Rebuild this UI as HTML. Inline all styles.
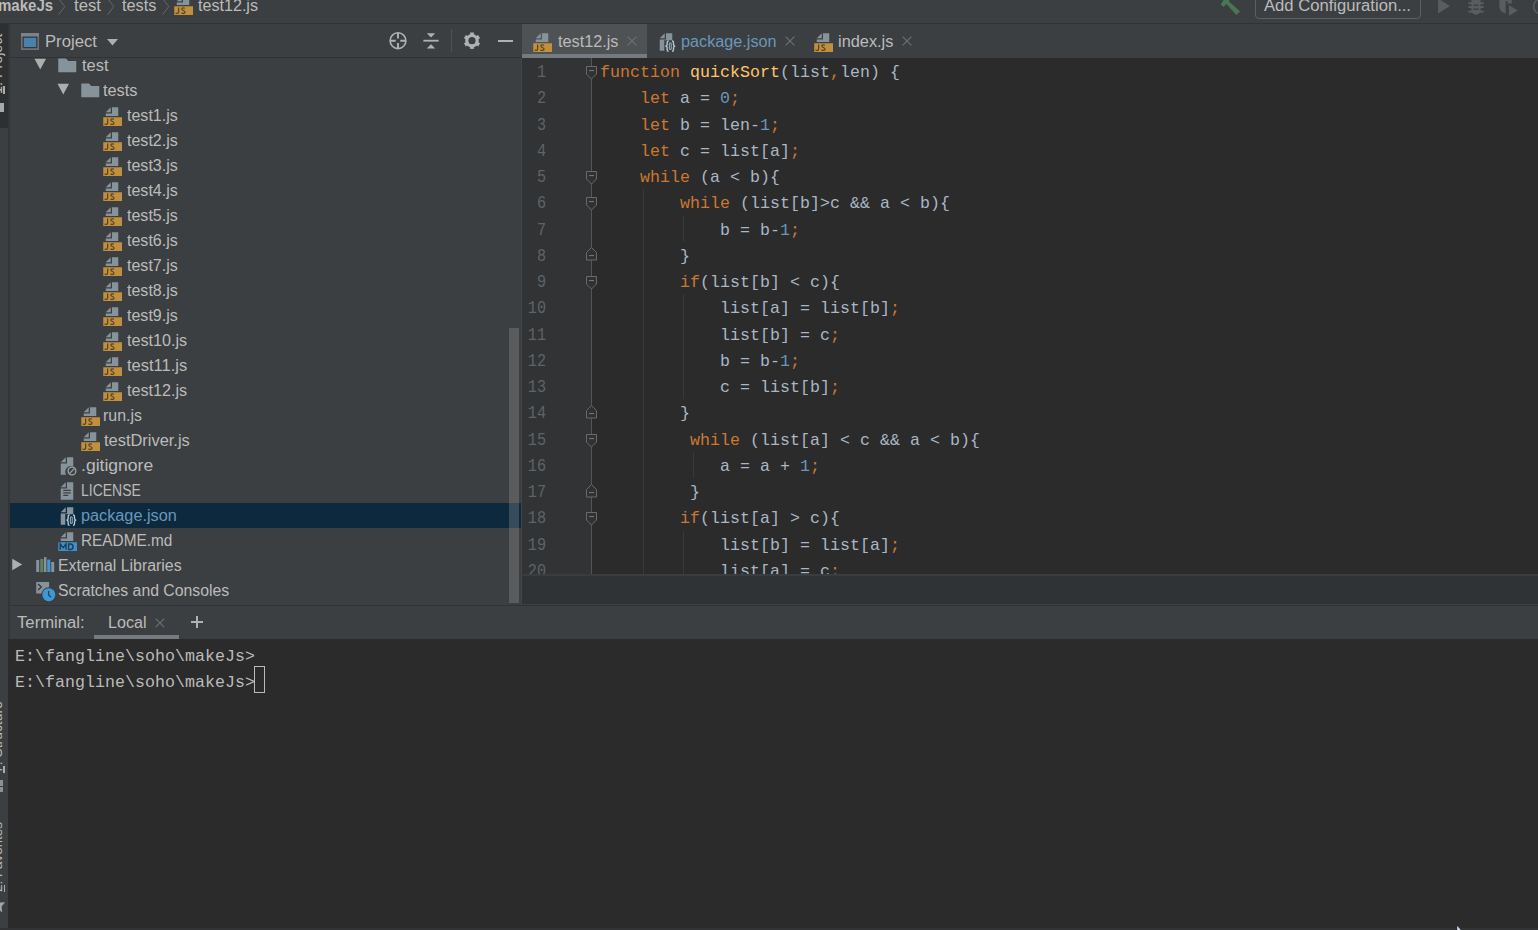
<!DOCTYPE html>
<html><head><meta charset="utf-8"><title>makeJs</title>
<style>
*{margin:0;padding:0;box-sizing:border-box}
html,body{width:1538px;height:930px;overflow:hidden;background:#3c3f41}
body{position:relative;font-family:"Liberation Sans",sans-serif;font-size:16px;color:#bbbbbb}
.abs{position:absolute}
.t{position:absolute;white-space:pre;line-height:20px;height:20px}
.mono{font-family:"Liberation Mono",monospace}
svg{position:absolute;overflow:visible}
.k{color:#cc7832}.n{color:#6897bb}.f{color:#ffc66d}
.cl{position:absolute;left:600.1px;white-space:pre;font-family:"Liberation Mono",monospace;font-size:16.6px;letter-spacing:.0384px;line-height:26px;height:26px;color:#a9b7c6}
.ln{position:absolute;left:516px;width:30px;text-align:right;white-space:pre;transform:scaleX(.84);transform-origin:100% 0;font-family:"Liberation Mono",monospace;font-size:18px;line-height:26px;height:26px;color:#606366}
</style></head>
<body>
<div class="abs" style="left:0;top:23px;width:1538px;height:1px;background:#323232"></div>
<div class="t" style="left:-1.6px;top:-4.4px;font-weight:bold;transform-origin:0 0;transform:scaleX(0.94)">makeJs</div>
<div class="t" style="left:73.50px;top:-4.4px;transform-origin:0 0;transform:scaleX(1.0440);">test</div>
<div class="t" style="left:122.40px;top:-4.4px;transform-origin:0 0;transform:scaleX(1.0181);">tests</div>
<div class="t" style="left:197.80px;top:-4.4px;transform-origin:0 0;transform:scaleX(1.0069);">test12.js</div>
<svg style="left:58px;top:-2px" width="8" height="18"><path d="M0.5 0.5 L6.8 8.5 L0.5 16.8" fill="none" stroke="#646769" stroke-width="1"/></svg>
<svg style="left:107px;top:-2px" width="8" height="18"><path d="M0.5 0.5 L6.8 8.5 L0.5 16.8" fill="none" stroke="#646769" stroke-width="1"/></svg>
<svg style="left:162.3px;top:-2px" width="8" height="18"><path d="M0.5 0.5 L6.8 8.5 L0.5 16.8" fill="none" stroke="#646769" stroke-width="1"/></svg>
<svg style="left:172.6px;top:-5px" width="20" height="20" viewBox="0 0 16 16"><polygon fill="#c0903f" points="1 16 16 16 16 9 1 9"/>
  <polygon fill="#87939a" points="7 1 3 5 7 5"/>
  <polygon fill="#87939a" points="8 1 8 6 3 6 3 8 13 8 13 1"/>
  <path fill="none" stroke="#5a4324" stroke-width="1" d="M2.1 14.2 C2.6 14.9 4.5 15 4.5 13.6 L4.5 10 M9.5 10.7 C8.7 9.9 6.9 10.1 7.1 11.4 C7.3 12.6 9.6 12.2 9.6 13.6 C9.6 15 7.7 15 6.8 14.2"/></svg>
<svg style="left:1212px;top:0" width="40" height="20" viewBox="0 0 40 20"><polygon fill="#4b7655" points="12.2,-1 8.8,4.3 11.4,7 14.4,3.9 24.4,15.1 28.1,11.4 17,1.6 17.3,-1"/></svg>
<div class="abs" style="left:1255px;top:-12px;width:166px;height:31px;border:1px solid #5e6060;border-radius:4px"></div>
<div class="t" style="left:1263.70px;top:-4.3px;transform-origin:0 0;transform:scaleX(1.0394);">Add Configuration...</div>
<svg style="left:1430px;top:0" width="108" height="24" viewBox="0 0 108 24"><g fill="#5a5d5f"><path d="M8.1 -1.4 L20 6 L8.1 13.4 Z"/><path d="M41.4 -3 H50.6 V10.1 A4.6 4.6 0 0 1 41.4 10.1 Z"/><rect x="38.3" y="2.3" width="15.4" height="1.9"/><rect x="38.3" y="6.1" width="15.4" height="1.9"/><rect x="38.3" y="10.7" width="15.4" height="1.9"/><path d="M69.3 -2 H81.8 V3.6 H76.6 V11.6 L75.4 13.6 C71.6 12.2 69.3 9.8 69.3 6.6 Z"/><path d="M79 5.3 L87.8 10.5 L79 15.8 Z"/></g><g fill="#3c3f41"><rect x="43.4" y="4.6" width="5.3" height="1.3"/><rect x="43.4" y="8.5" width="5.3" height="1.3"/><rect x="75.6" y="1" width="1.9" height="11.4"/></g><circle cx="111.2" cy="6.4" r="7.6" fill="none" stroke="#5a5d5f" stroke-width="1.5"/></svg>
<div class="abs" style="left:0;top:24px;width:8.4px;height:104px;background:#2d2f30"></div>
<div class="abs" style="left:8.4px;top:24px;width:1.25px;height:615px;background:#333638"></div>
<div class="abs" style="left:2.1px;top:93.6px;width:0;height:0"><div style="position:absolute;left:0;top:0;transform-origin:0 0;transform:rotate(-90deg) translateY(-14.95px);white-space:pre;font-size:14.3px;line-height:20px;height:20px;color:#bbbbbb">1: Project</div></div>
<div class="abs" style="left:2.9000000000000004px;top:85.6px;width:1.7px;height:8.0px;background:#a9abac"></div>
<div class="abs" style="left:2.1px;top:773.2px;width:0;height:0"><div style="position:absolute;left:0;top:0;transform-origin:0 0;transform:rotate(-90deg) translateY(-14.82px);white-space:pre;font-size:13.9px;line-height:20px;height:20px;color:#bbbbbb">7: Structure</div></div>
<div class="abs" style="left:2.9000000000000004px;top:765.5px;width:1.7px;height:7.7px;background:#a9abac"></div>
<div class="abs" style="left:2.9px;top:892.2px;width:0;height:0"><div style="position:absolute;left:0;top:0;transform-origin:0 0;transform:rotate(-90deg) translateY(-14.64px);white-space:pre;font-size:13.4px;line-height:20px;height:20px;color:#bbbbbb">2: Favorites</div></div>
<div class="abs" style="left:3.7px;top:884.7px;width:1.7px;height:7.5px;background:#a9abac"></div>
<div class="abs" style="left:0;top:103px;width:3.6px;height:9.4px;background:#a6a8a9"></div>
<div class="abs" style="left:0;top:780.4px;width:2.6px;height:5.4px;background:#8d9194"></div>
<div class="abs" style="left:0;top:787px;width:2.6px;height:5.4px;background:#8d9194"></div>
<svg style="left:0;top:901px" width="6" height="13" viewBox="0 0 6 13"><path d="M0 1.6 L5 1.2 L1.6 5.4 L2.2 11.6 L0 9.4 Z" fill="#a4a6a7"/></svg>
<div class="abs" style="left:9.5px;top:57px;width:512.5px;height:1px;background:#323232"></div>
<svg style="left:21px;top:33px" width="18" height="17" viewBox="0 0 18 17"><rect x="0" y="0" width="18" height="17" fill="#6c7175"/><rect x="0" y="0" width="18" height="3.4" fill="#7b8389"/><rect x="1.6" y="3.6" width="14.8" height="11.6" fill="#34383b"/><rect x="2.8" y="4.8" width="12.4" height="9.2" fill="#4a80ac"/></svg>
<div class="t" style="left:44.50px;top:31.6px;transform-origin:0 0;transform:scaleX(1.0415);">Project</div>
<svg style="left:107.4px;top:39px" width="11" height="7"><path d="M0 0 H11 L5.5 6.6 Z" fill="#adafaf"/></svg>
<svg style="left:388px;top:31px" width="20" height="20" viewBox="0 0 20 20"><g fill="none" stroke="#afb1b3"><circle cx="10" cy="9.7" r="7.9" stroke-width="1.6"/><path stroke-width="1.9" d="M10 1.8 V7.4 M10 12 V17.6 M2.1 9.7 H7.7 M12.3 9.7 H17.9"/></g></svg>
<svg style="left:421px;top:31px" width="20" height="20" viewBox="0 0 20 20"><g fill="#afb1b3"><rect x="2.4" y="8.8" width="15.2" height="1.8"/><path d="M5.8 2.2 H14.2 L10 6.4 Z"/><path d="M5.8 17.4 H14.2 L10 13.2 Z"/></g></svg>
<div class="abs" style="left:451px;top:29px;width:1px;height:24px;background:#4f5254"></div>
<svg style="left:462px;top:31px" width="20" height="20" viewBox="0 0 20 20"><g transform="translate(10 9.7)"><circle r="5.2" fill="none" stroke="#afb1b3" stroke-width="3.2"/><rect x="-1.9" y="-8.2" width="3.8" height="3.4" fill="#afb1b3" transform="rotate(0)"/><rect x="-1.9" y="-8.2" width="3.8" height="3.4" fill="#afb1b3" transform="rotate(60)"/><rect x="-1.9" y="-8.2" width="3.8" height="3.4" fill="#afb1b3" transform="rotate(120)"/><rect x="-1.9" y="-8.2" width="3.8" height="3.4" fill="#afb1b3" transform="rotate(180)"/><rect x="-1.9" y="-8.2" width="3.8" height="3.4" fill="#afb1b3" transform="rotate(240)"/><rect x="-1.9" y="-8.2" width="3.8" height="3.4" fill="#afb1b3" transform="rotate(300)"/></g></svg>
<div class="abs" style="left:497.5px;top:39.6px;width:15.4px;height:2px;background:#afb1b3"></div>
<div class="abs" style="left:9.5px;top:503px;width:512.5px;height:25px;background:#0d293e"></div>
<svg style="left:29.999999999999996px;top:55.3px" width="20" height="20" viewBox="0 0 16 16"><path fill="#adafaf" d="M3.6 3 L12.8 3 L8.2 11.5 Z"/></svg>
<svg style="left:56.8px;top:56px" width="20" height="20" viewBox="0 0 16 16"><path fill="#87939a" d="M1 13 L15.4 13 L15.4 4 L9 4 L7.2 2 L1 2 Z"/></svg>
<div class="t" style="left:81.60px;top:56.2px;transform-origin:0 0;transform:scaleX(1.0251);">test</div>
<svg style="left:53.0px;top:80.3px" width="20" height="20" viewBox="0 0 16 16"><path fill="#adafaf" d="M3.6 3 L12.8 3 L8.2 11.5 Z"/></svg>
<svg style="left:79.8px;top:81px" width="20" height="20" viewBox="0 0 16 16"><path fill="#87939a" d="M1 13 L15.4 13 L15.4 4 L9 4 L7.2 2 L1 2 Z"/></svg>
<div class="t" style="left:103.30px;top:81.2px;transform-origin:0 0;transform:scaleX(1.0210);">tests</div>
<svg style="left:101.8px;top:106px" width="20" height="20" viewBox="0 0 16 16"><polygon fill="#c0903f" points="1 16 16 16 16 9 1 9"/>
  <polygon fill="#87939a" points="7 1 3 5 7 5"/>
  <polygon fill="#87939a" points="8 1 8 6 3 6 3 8 13 8 13 1"/>
  <path fill="none" stroke="#5a4324" stroke-width="1" d="M2.1 14.2 C2.6 14.9 4.5 15 4.5 13.6 L4.5 10 M9.5 10.7 C8.7 9.9 6.9 10.1 7.1 11.4 C7.3 12.6 9.6 12.2 9.6 13.6 C9.6 15 7.7 15 6.8 14.2"/></svg>
<div class="t" style="left:126.80px;top:106.2px;transform-origin:0 0;transform:scaleX(1.0022);">test1.js</div>
<svg style="left:101.8px;top:131px" width="20" height="20" viewBox="0 0 16 16"><polygon fill="#c0903f" points="1 16 16 16 16 9 1 9"/>
  <polygon fill="#87939a" points="7 1 3 5 7 5"/>
  <polygon fill="#87939a" points="8 1 8 6 3 6 3 8 13 8 13 1"/>
  <path fill="none" stroke="#5a4324" stroke-width="1" d="M2.1 14.2 C2.6 14.9 4.5 15 4.5 13.6 L4.5 10 M9.5 10.7 C8.7 9.9 6.9 10.1 7.1 11.4 C7.3 12.6 9.6 12.2 9.6 13.6 C9.6 15 7.7 15 6.8 14.2"/></svg>
<div class="t" style="left:126.80px;top:131.2px;transform-origin:0 0;transform:scaleX(1.0022);">test2.js</div>
<svg style="left:101.8px;top:156px" width="20" height="20" viewBox="0 0 16 16"><polygon fill="#c0903f" points="1 16 16 16 16 9 1 9"/>
  <polygon fill="#87939a" points="7 1 3 5 7 5"/>
  <polygon fill="#87939a" points="8 1 8 6 3 6 3 8 13 8 13 1"/>
  <path fill="none" stroke="#5a4324" stroke-width="1" d="M2.1 14.2 C2.6 14.9 4.5 15 4.5 13.6 L4.5 10 M9.5 10.7 C8.7 9.9 6.9 10.1 7.1 11.4 C7.3 12.6 9.6 12.2 9.6 13.6 C9.6 15 7.7 15 6.8 14.2"/></svg>
<div class="t" style="left:126.80px;top:156.2px;transform-origin:0 0;transform:scaleX(1.0022);">test3.js</div>
<svg style="left:101.8px;top:181px" width="20" height="20" viewBox="0 0 16 16"><polygon fill="#c0903f" points="1 16 16 16 16 9 1 9"/>
  <polygon fill="#87939a" points="7 1 3 5 7 5"/>
  <polygon fill="#87939a" points="8 1 8 6 3 6 3 8 13 8 13 1"/>
  <path fill="none" stroke="#5a4324" stroke-width="1" d="M2.1 14.2 C2.6 14.9 4.5 15 4.5 13.6 L4.5 10 M9.5 10.7 C8.7 9.9 6.9 10.1 7.1 11.4 C7.3 12.6 9.6 12.2 9.6 13.6 C9.6 15 7.7 15 6.8 14.2"/></svg>
<div class="t" style="left:126.80px;top:181.2px;transform-origin:0 0;transform:scaleX(1.0022);">test4.js</div>
<svg style="left:101.8px;top:206px" width="20" height="20" viewBox="0 0 16 16"><polygon fill="#c0903f" points="1 16 16 16 16 9 1 9"/>
  <polygon fill="#87939a" points="7 1 3 5 7 5"/>
  <polygon fill="#87939a" points="8 1 8 6 3 6 3 8 13 8 13 1"/>
  <path fill="none" stroke="#5a4324" stroke-width="1" d="M2.1 14.2 C2.6 14.9 4.5 15 4.5 13.6 L4.5 10 M9.5 10.7 C8.7 9.9 6.9 10.1 7.1 11.4 C7.3 12.6 9.6 12.2 9.6 13.6 C9.6 15 7.7 15 6.8 14.2"/></svg>
<div class="t" style="left:126.80px;top:206.2px;transform-origin:0 0;transform:scaleX(1.0022);">test5.js</div>
<svg style="left:101.8px;top:231px" width="20" height="20" viewBox="0 0 16 16"><polygon fill="#c0903f" points="1 16 16 16 16 9 1 9"/>
  <polygon fill="#87939a" points="7 1 3 5 7 5"/>
  <polygon fill="#87939a" points="8 1 8 6 3 6 3 8 13 8 13 1"/>
  <path fill="none" stroke="#5a4324" stroke-width="1" d="M2.1 14.2 C2.6 14.9 4.5 15 4.5 13.6 L4.5 10 M9.5 10.7 C8.7 9.9 6.9 10.1 7.1 11.4 C7.3 12.6 9.6 12.2 9.6 13.6 C9.6 15 7.7 15 6.8 14.2"/></svg>
<div class="t" style="left:126.80px;top:231.2px;transform-origin:0 0;transform:scaleX(1.0022);">test6.js</div>
<svg style="left:101.8px;top:256px" width="20" height="20" viewBox="0 0 16 16"><polygon fill="#c0903f" points="1 16 16 16 16 9 1 9"/>
  <polygon fill="#87939a" points="7 1 3 5 7 5"/>
  <polygon fill="#87939a" points="8 1 8 6 3 6 3 8 13 8 13 1"/>
  <path fill="none" stroke="#5a4324" stroke-width="1" d="M2.1 14.2 C2.6 14.9 4.5 15 4.5 13.6 L4.5 10 M9.5 10.7 C8.7 9.9 6.9 10.1 7.1 11.4 C7.3 12.6 9.6 12.2 9.6 13.6 C9.6 15 7.7 15 6.8 14.2"/></svg>
<div class="t" style="left:126.80px;top:256.2px;transform-origin:0 0;transform:scaleX(1.0022);">test7.js</div>
<svg style="left:101.8px;top:281px" width="20" height="20" viewBox="0 0 16 16"><polygon fill="#c0903f" points="1 16 16 16 16 9 1 9"/>
  <polygon fill="#87939a" points="7 1 3 5 7 5"/>
  <polygon fill="#87939a" points="8 1 8 6 3 6 3 8 13 8 13 1"/>
  <path fill="none" stroke="#5a4324" stroke-width="1" d="M2.1 14.2 C2.6 14.9 4.5 15 4.5 13.6 L4.5 10 M9.5 10.7 C8.7 9.9 6.9 10.1 7.1 11.4 C7.3 12.6 9.6 12.2 9.6 13.6 C9.6 15 7.7 15 6.8 14.2"/></svg>
<div class="t" style="left:126.80px;top:281.2px;transform-origin:0 0;transform:scaleX(1.0022);">test8.js</div>
<svg style="left:101.8px;top:306px" width="20" height="20" viewBox="0 0 16 16"><polygon fill="#c0903f" points="1 16 16 16 16 9 1 9"/>
  <polygon fill="#87939a" points="7 1 3 5 7 5"/>
  <polygon fill="#87939a" points="8 1 8 6 3 6 3 8 13 8 13 1"/>
  <path fill="none" stroke="#5a4324" stroke-width="1" d="M2.1 14.2 C2.6 14.9 4.5 15 4.5 13.6 L4.5 10 M9.5 10.7 C8.7 9.9 6.9 10.1 7.1 11.4 C7.3 12.6 9.6 12.2 9.6 13.6 C9.6 15 7.7 15 6.8 14.2"/></svg>
<div class="t" style="left:126.80px;top:306.2px;transform-origin:0 0;transform:scaleX(1.0022);">test9.js</div>
<svg style="left:101.8px;top:331px" width="20" height="20" viewBox="0 0 16 16"><polygon fill="#c0903f" points="1 16 16 16 16 9 1 9"/>
  <polygon fill="#87939a" points="7 1 3 5 7 5"/>
  <polygon fill="#87939a" points="8 1 8 6 3 6 3 8 13 8 13 1"/>
  <path fill="none" stroke="#5a4324" stroke-width="1" d="M2.1 14.2 C2.6 14.9 4.5 15 4.5 13.6 L4.5 10 M9.5 10.7 C8.7 9.9 6.9 10.1 7.1 11.4 C7.3 12.6 9.6 12.2 9.6 13.6 C9.6 15 7.7 15 6.8 14.2"/></svg>
<div class="t" style="left:126.80px;top:331.2px;transform-origin:0 0;transform:scaleX(1.0102);">test10.js</div>
<svg style="left:101.8px;top:356px" width="20" height="20" viewBox="0 0 16 16"><polygon fill="#c0903f" points="1 16 16 16 16 9 1 9"/>
  <polygon fill="#87939a" points="7 1 3 5 7 5"/>
  <polygon fill="#87939a" points="8 1 8 6 3 6 3 8 13 8 13 1"/>
  <path fill="none" stroke="#5a4324" stroke-width="1" d="M2.1 14.2 C2.6 14.9 4.5 15 4.5 13.6 L4.5 10 M9.5 10.7 C8.7 9.9 6.9 10.1 7.1 11.4 C7.3 12.6 9.6 12.2 9.6 13.6 C9.6 15 7.7 15 6.8 14.2"/></svg>
<div class="t" style="left:126.80px;top:356.2px;transform-origin:0 0;transform:scaleX(1.0308);">test11.js</div>
<svg style="left:101.8px;top:381px" width="20" height="20" viewBox="0 0 16 16"><polygon fill="#c0903f" points="1 16 16 16 16 9 1 9"/>
  <polygon fill="#87939a" points="7 1 3 5 7 5"/>
  <polygon fill="#87939a" points="8 1 8 6 3 6 3 8 13 8 13 1"/>
  <path fill="none" stroke="#5a4324" stroke-width="1" d="M2.1 14.2 C2.6 14.9 4.5 15 4.5 13.6 L4.5 10 M9.5 10.7 C8.7 9.9 6.9 10.1 7.1 11.4 C7.3 12.6 9.6 12.2 9.6 13.6 C9.6 15 7.7 15 6.8 14.2"/></svg>
<div class="t" style="left:126.80px;top:381.2px;transform-origin:0 0;transform:scaleX(1.0102);">test12.js</div>
<svg style="left:79.8px;top:406px" width="20" height="20" viewBox="0 0 16 16"><polygon fill="#c0903f" points="1 16 16 16 16 9 1 9"/>
  <polygon fill="#87939a" points="7 1 3 5 7 5"/>
  <polygon fill="#87939a" points="8 1 8 6 3 6 3 8 13 8 13 1"/>
  <path fill="none" stroke="#5a4324" stroke-width="1" d="M2.1 14.2 C2.6 14.9 4.5 15 4.5 13.6 L4.5 10 M9.5 10.7 C8.7 9.9 6.9 10.1 7.1 11.4 C7.3 12.6 9.6 12.2 9.6 13.6 C9.6 15 7.7 15 6.8 14.2"/></svg>
<div class="t" style="left:102.70px;top:406.2px;transform-origin:0 0;transform:scaleX(0.9942);">run.js</div>
<svg style="left:79.8px;top:431px" width="20" height="20" viewBox="0 0 16 16"><polygon fill="#c0903f" points="1 16 16 16 16 9 1 9"/>
  <polygon fill="#87939a" points="7 1 3 5 7 5"/>
  <polygon fill="#87939a" points="8 1 8 6 3 6 3 8 13 8 13 1"/>
  <path fill="none" stroke="#5a4324" stroke-width="1" d="M2.1 14.2 C2.6 14.9 4.5 15 4.5 13.6 L4.5 10 M9.5 10.7 C8.7 9.9 6.9 10.1 7.1 11.4 C7.3 12.6 9.6 12.2 9.6 13.6 C9.6 15 7.7 15 6.8 14.2"/></svg>
<div class="t" style="left:103.70px;top:431.2px;transform-origin:0 0;transform:scaleX(1.0267);">testDriver.js</div>
<svg style="left:56.8px;top:456px" width="20" height="20" viewBox="0 0 16 16"><polygon fill="#87939a" points="7 1 3 5 7 5"/>
  <path fill="#87939a" d="M8 1 L8 6 L3 6 L3 15 L7.3 15 A4.6 4.6 0 0 1 13 8.4 L13 1 Z"/>
  <circle cx="12" cy="12" r="3.1" fill="none" stroke="#9aa3a9" stroke-width="1.1"/>
  <path d="M9.9 14.1 L14.1 9.9" stroke="#9aa3a9" stroke-width="1.1"/></svg>
<div class="t" style="left:80.50px;top:456.2px;transform-origin:0 0;transform:scaleX(1.0967);">.gitignore</div>
<svg style="left:56.8px;top:481px" width="20" height="20" viewBox="0 0 16 16"><polygon fill="#87939a" points="7 1 3 5 7 5"/>
  <path fill="#87939a" fill-rule="evenodd" d="M8 1 L8 6 L3 6 L3 15 L13 15 L13 1 Z M5 7 H11 V8 H5 Z M5 9 H11 V10 H5 Z M5 11 H9 V12 H5 Z"/></svg>
<div class="t" style="left:80.80px;top:481.2px;transform-origin:0 0;transform:scaleX(0.8743);">LICENSE</div>
<svg style="left:56.8px;top:506px" width="20" height="20" viewBox="0 0 16 16"><polygon fill="#87939a" points="7 1 3 5 7 5"/>
  <path fill="#87939a" d="M8 1 L8 6 L3 6 L3 15 L6.6 15 L6.6 6.6 L13 6.6 L13 1 Z"/>
  <path fill="none" stroke="#b6cbd8" stroke-width="1.1" d="M10.1 7.2 C9.1 7.2 8.9 7.8 8.9 8.6 V10 C8.9 10.8 8.5 11.3 7.5 11.3 C8.5 11.3 8.9 11.8 8.9 12.6 V14.1 C8.9 14.9 9.1 15.5 10.1 15.5 M12.8 7.2 C13.8 7.2 14 7.8 14 8.6 V10 C14 10.8 14.4 11.3 15.4 11.3 C14.4 11.3 14 11.8 14 12.6 V14.1 C14 14.9 13.8 15.5 12.8 15.5"/>
  <rect x="10.7" y="8.6" width="1.5" height="5.4" rx=".75" fill="none" stroke="#8fa9ba" stroke-width=".9"/></svg>
<div class="t" style="left:80.80px;top:506.2px;transform-origin:0 0;transform:scaleX(1.0153);color:#6897bb;">package.json</div>
<svg style="left:56.8px;top:531px" width="20" height="20" viewBox="0 0 16 16"><polygon fill="#3f91c4" points="1 16 16 16 16 9 1 9"/>
  <polygon fill="#87939a" points="7 1 3 5 7 5"/>
  <polygon fill="#87939a" points="8 1 8 6 3 6 3 8 13 8 13 1"/>
  <path fill="none" stroke="#1d3a5c" stroke-width="1.1" d="M2.6 15 V10.4 L4.9 13.3 L7.2 10.4 V15 M9.3 10.4 V14.9 H10.6 C13.6 14.9 13.6 10.4 10.6 10.4 Z"/></svg>
<div class="t" style="left:81.20px;top:531.2px;transform-origin:0 0;transform:scaleX(0.9589);">README.md</div>
<svg style="left:6.9999999999999964px;top:555.3px" width="20" height="20" viewBox="0 0 16 16"><path fill="#adafaf" d="M4.2 3 L4.2 12.2 L12.2 7.6 Z"/></svg>
<svg style="left:33.8px;top:556px" width="20" height="20" viewBox="0 0 16 16"><rect x="1.76" y="3.2" width="2.4" height="9.6" fill="#87939a"/>
  <rect x="4.96" y="2.4" width="2.56" height="10.56" fill="#62805e"/>
  <rect x="8.0" y="0.88" width="1.92" height="11.92" fill="#87939a"/>
  <rect x="10.56" y="2.88" width="2.48" height="9.92" fill="#3f97d4"/>
  <rect x="13.76" y="4.8" width="2.4" height="8.0" fill="#87939a"/></svg>
<div class="t" style="left:58.00px;top:556.2px;transform-origin:0 0;transform:scaleX(0.9927);">External Libraries</div>
<svg style="left:33.8px;top:581px" width="20" height="20" viewBox="0 0 16 16"><rect x="1.76" y="0.8" width="10.32" height="9.2" fill="#87939a"/>
  <path fill="none" stroke="#33373a" stroke-width="1" d="M3.28 2.4 L5.84 4.8 L3.28 7.2"/>
  <circle cx="11.84" cy="10.96" r="6.0" fill="#3c3f41"/>
  <circle cx="11.84" cy="10.96" r="5.2" fill="#3f97d4"/>
  <path fill="none" stroke="#24435c" stroke-width="1" d="M11.68 8.0 V11.12 L13.6 12.96"/></svg>
<div class="t" style="left:57.70px;top:581.2px;transform-origin:0 0;transform:scaleX(0.9871);">Scratches and Consoles</div>
<div class="abs" style="left:9.5px;top:52px;width:512.5px;height:5px;background:#3c3f41"></div>
<div class="abs" style="left:509px;top:328px;width:10px;height:275px;background:rgba(166,166,166,.28)"></div>
<div class="abs" style="left:521px;top:58px;width:1px;height:547px;background:#434649"></div>
<div class="abs" style="left:522px;top:24px;width:125px;height:30px;background:#4e5254"></div>
<div class="abs" style="left:522px;top:54px;width:125px;height:4px;background:#747a80"></div>
<svg style="left:531.9px;top:31.8px" width="20" height="20" viewBox="0 0 16 16"><polygon fill="#c0903f" points="1 16 16 16 16 9 1 9"/>
  <polygon fill="#87939a" points="7 1 3 5 7 5"/>
  <polygon fill="#87939a" points="8 1 8 6 3 6 3 8 13 8 13 1"/>
  <path fill="none" stroke="#5a4324" stroke-width="1" d="M2.1 14.2 C2.6 14.9 4.5 15 4.5 13.6 L4.5 10 M9.5 10.7 C8.7 9.9 6.9 10.1 7.1 11.4 C7.3 12.6 9.6 12.2 9.6 13.6 C9.6 15 7.7 15 6.8 14.2"/></svg>
<div class="t" style="left:557.50px;top:31.8px;transform-origin:0 0;transform:scaleX(1.0136);">test12.js</div>
<svg style="left:627.2px;top:36px" width="10" height="10"><path d="M0.6 0.6 L9.4 9.4 M9.4 0.6 L0.6 9.4" stroke="#6e7173" stroke-width="1.1" fill="none"/></svg>
<svg style="left:655.9px;top:31.8px" width="20" height="20" viewBox="0 0 16 16"><polygon fill="#87939a" points="7 1 3 5 7 5"/>
  <path fill="#87939a" d="M8 1 L8 6 L3 6 L3 15 L6.6 15 L6.6 6.6 L13 6.6 L13 1 Z"/>
  <path fill="none" stroke="#b6cbd8" stroke-width="1.1" d="M10.1 7.2 C9.1 7.2 8.9 7.8 8.9 8.6 V10 C8.9 10.8 8.5 11.3 7.5 11.3 C8.5 11.3 8.9 11.8 8.9 12.6 V14.1 C8.9 14.9 9.1 15.5 10.1 15.5 M12.8 7.2 C13.8 7.2 14 7.8 14 8.6 V10 C14 10.8 14.4 11.3 15.4 11.3 C14.4 11.3 14 11.8 14 12.6 V14.1 C14 14.9 13.8 15.5 12.8 15.5"/>
  <rect x="10.7" y="8.6" width="1.5" height="5.4" rx=".75" fill="none" stroke="#8fa9ba" stroke-width=".9"/></svg>
<div class="t" style="left:680.60px;top:31.8px;transform-origin:0 0;transform:scaleX(1.0131);color:#6897bb;">package.json</div>
<svg style="left:784.6px;top:36px" width="10" height="10"><path d="M0.6 0.6 L9.4 9.4 M9.4 0.6 L0.6 9.4" stroke="#6e7173" stroke-width="1.1" fill="none"/></svg>
<svg style="left:812.9px;top:31.8px" width="20" height="20" viewBox="0 0 16 16"><polygon fill="#c0903f" points="1 16 16 16 16 9 1 9"/>
  <polygon fill="#87939a" points="7 1 3 5 7 5"/>
  <polygon fill="#87939a" points="8 1 8 6 3 6 3 8 13 8 13 1"/>
  <path fill="none" stroke="#5a4324" stroke-width="1" d="M2.1 14.2 C2.6 14.9 4.5 15 4.5 13.6 L4.5 10 M9.5 10.7 C8.7 9.9 6.9 10.1 7.1 11.4 C7.3 12.6 9.6 12.2 9.6 13.6 C9.6 15 7.7 15 6.8 14.2"/></svg>
<div class="t" style="left:837.50px;top:31.8px;transform-origin:0 0;transform:scaleX(1.0216);">index.js</div>
<svg style="left:902px;top:36px" width="10" height="10"><path d="M0.6 0.6 L9.4 9.4 M9.4 0.6 L0.6 9.4" stroke="#6e7173" stroke-width="1.1" fill="none"/></svg>
<div class="abs" style="left:522px;top:58px;width:1016px;height:516px;background:#2b2b2b;overflow:hidden"></div>
<div class="abs" style="left:522px;top:58px;width:69px;height:516px;background:#313335"></div>
<div class="abs" style="left:591px;top:58px;width:1px;height:516px;background:#555555"></div>
<div class="abs" style="left:522px;top:574px;width:1016px;height:2px;background:#3a3d3f"></div>
<div class="abs" style="left:522px;top:576px;width:1016px;height:28px;background:#2f3335"></div>
<div class="abs" style="left:522px;top:58px;width:1016px;height:516px;overflow:hidden">
<div class="abs" style="left:-522px;top:-58px;width:1538px;height:930px">
<div class="abs" style="left:643px;top:189.25px;width:1px;height:420.0px;background:#393939"></div>
<div class="abs" style="left:683px;top:215.5px;width:1px;height:26.25px;background:#393939"></div>
<div class="abs" style="left:683px;top:294.25px;width:1px;height:105.0px;background:#393939"></div>
<div class="abs" style="left:693px;top:451.75px;width:1px;height:26.25px;background:#393939"></div>
<div class="abs" style="left:683px;top:530.5px;width:1px;height:78.75px;background:#393939"></div>
<div class="ln" style="top:59.00px">1</div>
<div class="cl" style="top:60.20px"><span class="k">function </span><span class="f">quickSort</span>(list<span class="k">,</span>len) {</div>
<div class="ln" style="top:85.25px">2</div>
<div class="cl" style="top:86.45px">    <span class="k">let </span>a = <span class="n">0</span><span class="k">;</span></div>
<div class="ln" style="top:111.50px">3</div>
<div class="cl" style="top:112.70px">    <span class="k">let </span>b = len-<span class="n">1</span><span class="k">;</span></div>
<div class="ln" style="top:137.75px">4</div>
<div class="cl" style="top:138.95px">    <span class="k">let </span>c = list[a]<span class="k">;</span></div>
<div class="ln" style="top:164.00px">5</div>
<div class="cl" style="top:165.20px">    <span class="k">while </span>(a &lt; b){</div>
<div class="ln" style="top:190.25px">6</div>
<div class="cl" style="top:191.45px">        <span class="k">while </span>(list[b]&gt;c &amp;&amp; a &lt; b){</div>
<div class="ln" style="top:216.50px">7</div>
<div class="cl" style="top:217.70px">            b = b-<span class="n">1</span><span class="k">;</span></div>
<div class="ln" style="top:242.75px">8</div>
<div class="cl" style="top:243.95px">        }</div>
<div class="ln" style="top:269.00px">9</div>
<div class="cl" style="top:270.20px">        <span class="k">if</span>(list[b] &lt; c){</div>
<div class="ln" style="top:295.25px">10</div>
<div class="cl" style="top:296.45px">            list[a] = list[b]<span class="k">;</span></div>
<div class="ln" style="top:321.50px">11</div>
<div class="cl" style="top:322.70px">            list[b] = c<span class="k">;</span></div>
<div class="ln" style="top:347.75px">12</div>
<div class="cl" style="top:348.95px">            b = b-<span class="n">1</span><span class="k">;</span></div>
<div class="ln" style="top:374.00px">13</div>
<div class="cl" style="top:375.20px">            c = list[b]<span class="k">;</span></div>
<div class="ln" style="top:400.25px">14</div>
<div class="cl" style="top:401.45px">        }</div>
<div class="ln" style="top:426.50px">15</div>
<div class="cl" style="top:427.70px">         <span class="k">while </span>(list[a] &lt; c &amp;&amp; a &lt; b){</div>
<div class="ln" style="top:452.75px">16</div>
<div class="cl" style="top:453.95px">            a = a + <span class="n">1</span><span class="k">;</span></div>
<div class="ln" style="top:479.00px">17</div>
<div class="cl" style="top:480.20px">         }</div>
<div class="ln" style="top:505.25px">18</div>
<div class="cl" style="top:506.45px">        <span class="k">if</span>(list[a] &gt; c){</div>
<div class="ln" style="top:531.50px">19</div>
<div class="cl" style="top:532.70px">            list[b] = list[a]<span class="k">;</span></div>
<div class="ln" style="top:557.75px">20</div>
<div class="cl" style="top:558.95px">            list[a] = c<span class="k">;</span></div>
<svg style="left:586px;top:66.20px" width="11" height="14"><path d="M0.5 0.5 H10.5 V8 L5.5 13 L0.5 8 Z" fill="#2f3133" stroke="#686a6c" stroke-width="1"/><path d="M3 4.6 H8" stroke="#7a7c7e" stroke-width="1"/></svg>
<svg style="left:586px;top:171.20px" width="11" height="14"><path d="M0.5 0.5 H10.5 V8 L5.5 13 L0.5 8 Z" fill="#2f3133" stroke="#686a6c" stroke-width="1"/><path d="M3 4.6 H8" stroke="#7a7c7e" stroke-width="1"/></svg>
<svg style="left:586px;top:197.45px" width="11" height="14"><path d="M0.5 0.5 H10.5 V8 L5.5 13 L0.5 8 Z" fill="#2f3133" stroke="#686a6c" stroke-width="1"/><path d="M3 4.6 H8" stroke="#7a7c7e" stroke-width="1"/></svg>
<svg style="left:586px;top:276.20px" width="11" height="14"><path d="M0.5 0.5 H10.5 V8 L5.5 13 L0.5 8 Z" fill="#2f3133" stroke="#686a6c" stroke-width="1"/><path d="M3 4.6 H8" stroke="#7a7c7e" stroke-width="1"/></svg>
<svg style="left:586px;top:433.70px" width="11" height="14"><path d="M0.5 0.5 H10.5 V8 L5.5 13 L0.5 8 Z" fill="#2f3133" stroke="#686a6c" stroke-width="1"/><path d="M3 4.6 H8" stroke="#7a7c7e" stroke-width="1"/></svg>
<svg style="left:586px;top:512.45px" width="11" height="14"><path d="M0.5 0.5 H10.5 V8 L5.5 13 L0.5 8 Z" fill="#2f3133" stroke="#686a6c" stroke-width="1"/><path d="M3 4.6 H8" stroke="#7a7c7e" stroke-width="1"/></svg>
<svg style="left:586px;top:247.25px" width="11" height="14"><path d="M0.5 13 H10.5 V5.5 L5.5 0.5 L0.5 5.5 Z" fill="#2f3133" stroke="#686a6c" stroke-width="1"/><path d="M3 8.6 H8" stroke="#7a7c7e" stroke-width="1"/></svg>
<svg style="left:586px;top:404.75px" width="11" height="14"><path d="M0.5 13 H10.5 V5.5 L5.5 0.5 L0.5 5.5 Z" fill="#2f3133" stroke="#686a6c" stroke-width="1"/><path d="M3 8.6 H8" stroke="#7a7c7e" stroke-width="1"/></svg>
<svg style="left:586px;top:483.50px" width="11" height="14"><path d="M0.5 13 H10.5 V5.5 L5.5 0.5 L0.5 5.5 Z" fill="#2f3133" stroke="#686a6c" stroke-width="1"/><path d="M3 8.6 H8" stroke="#7a7c7e" stroke-width="1"/></svg>
</div></div>
<div class="abs" style="left:9px;top:605px;width:1529px;height:1px;background:#323232"></div>
<div class="abs" style="left:8.4px;top:639px;width:1530px;height:289px;background:#2b2b2b"></div>
<div class="abs" style="left:0;top:928px;width:1538px;height:2px;background:#313335"></div>
<div class="t" style="left:17.00px;top:612.6px;transform-origin:0 0;transform:scaleX(1.0432);">Terminal:</div>
<div class="t" style="left:107.70px;top:612.6px;transform-origin:0 0;transform:scaleX(1.0054);">Local</div>
<svg style="left:155px;top:618.4px" width="10" height="10"><path d="M0.6 0.6 L9.2 9.2 M9.2 0.6 L0.6 9.2" stroke="#6e7173" stroke-width="1.1" fill="none"/></svg>
<div class="abs" style="left:93.5px;top:635px;width:85px;height:4px;background:#747a80"></div>
<div class="abs" style="left:191px;top:621.2px;width:12.2px;height:2px;background:#afb1b3"></div>
<div class="abs" style="left:196.1px;top:616.2px;width:2px;height:12.2px;background:#afb1b3"></div>
<div class="t mono" style="left:15px;top:644.2px;font-size:16.6px;letter-spacing:.0384px;line-height:26px;height:26px;color:#bbbbbb">E:\fangline\soho\makeJs&gt;</div>
<div class="t mono" style="left:15px;top:670.4px;font-size:16.6px;letter-spacing:.0384px;line-height:26px;height:26px;color:#bbbbbb">E:\fangline\soho\makeJs&gt;</div>
<div class="abs" style="left:254px;top:666px;width:11px;height:27px;border:1.2px solid #bbbbbb"></div>
<svg style="left:1454px;top:922px" width="12" height="8" viewBox="0 0 12 8"><path d="M2.7 2.8 L2.7 9 L8.4 9 Z" fill="#dcdcdc" stroke="#0c2038" stroke-width="1"/></svg>
</body></html>
